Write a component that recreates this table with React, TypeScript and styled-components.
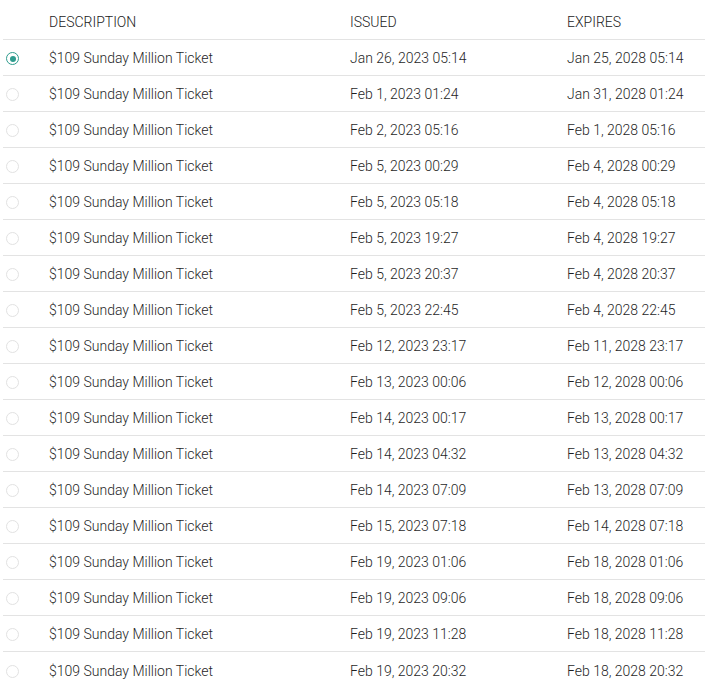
import React from 'react';
import styled, { createGlobalStyle } from 'styled-components';

const GlobalStyle = createGlobalStyle`
  body {
    margin: 0;
    background: #ffffff;
    font-family: Roboto, "Liberation Sans", sans-serif;
  }
`;

const Table = styled.div`
  width: 702px;
  margin-left: 3px;
`;

const Row = styled.div<{ $head?: boolean }>`
  display: grid;
  grid-template-columns: 46px 301px 217px 1fr;
  align-items: ${(p) => (p.$head ? 'end' : 'center')};
  box-sizing: border-box;
  height: ${(p) => (p.$head ? '40px' : '36px')};
  padding: ${(p) => (p.$head ? '0 0 9px' : '1px 0 0')};
  border-bottom: 1px solid #e3e3e3;
  &:last-child {
    border-bottom: none;
  }
`;

const HeadCell = styled.div`
  font-size: 14px;
  font-weight: 300;
  color: #222222;
  text-transform: uppercase;
`;

const Cell = styled.div`
  font-size: 14px;
  font-weight: 300;
  color: #1f1f1f;
`;

const Radio = styled.span<{ $checked?: boolean }>`
  display: block;
  box-sizing: border-box;
  width: 13px;
  height: 13px;
  margin: 1px 0 0 3px;
  border-radius: 50%;
  border: 1px solid ${(p) => (p.$checked ? '#2f9c8e' : '#e2e2e2')};
  position: relative;
  &::after {
    content: '';
    display: ${(p) => (p.$checked ? 'block' : 'none')};
    position: absolute;
    left: 2.5px;
    top: 2.5px;
    width: 6px;
    height: 6px;
    border-radius: 50%;
    background: #2f9c8e;
  }
`;

const tickets: [string, string][] = [
  ['Jan 26, 2023 05:14', 'Jan 25, 2028 05:14'],
  ['Feb 1, 2023 01:24', 'Jan 31, 2028 01:24'],
  ['Feb 2, 2023 05:16', 'Feb 1, 2028 05:16'],
  ['Feb 5, 2023 00:29', 'Feb 4, 2028 00:29'],
  ['Feb 5, 2023 05:18', 'Feb 4, 2028 05:18'],
  ['Feb 5, 2023 19:27', 'Feb 4, 2028 19:27'],
  ['Feb 5, 2023 20:37', 'Feb 4, 2028 20:37'],
  ['Feb 5, 2023 22:45', 'Feb 4, 2028 22:45'],
  ['Feb 12, 2023 23:17', 'Feb 11, 2028 23:17'],
  ['Feb 13, 2023 00:06', 'Feb 12, 2028 00:06'],
  ['Feb 14, 2023 00:17', 'Feb 13, 2028 00:17'],
  ['Feb 14, 2023 04:32', 'Feb 13, 2028 04:32'],
  ['Feb 14, 2023 07:09', 'Feb 13, 2028 07:09'],
  ['Feb 15, 2023 07:18', 'Feb 14, 2028 07:18'],
  ['Feb 19, 2023 01:06', 'Feb 18, 2028 01:06'],
  ['Feb 19, 2023 09:06', 'Feb 18, 2028 09:06'],
  ['Feb 19, 2023 11:28', 'Feb 18, 2028 11:28'],
  ['Feb 19, 2023 20:32', 'Feb 18, 2028 20:32'],
];

export default function App(): React.ReactElement {
  return (
    <>
      <GlobalStyle />
      <Table>
        <Row $head>
          <span />
          <HeadCell>Description</HeadCell>
          <HeadCell>Issued</HeadCell>
          <HeadCell>Expires</HeadCell>
        </Row>
        {tickets.map(([issued, expires], i) => (
          <Row key={i}>
            <Radio $checked={i === 0} />
            <Cell>$109 Sunday Million Ticket</Cell>
            <Cell>{issued}</Cell>
            <Cell>{expires}</Cell>
          </Row>
        ))}
      </Table>
    </>
  );
}
